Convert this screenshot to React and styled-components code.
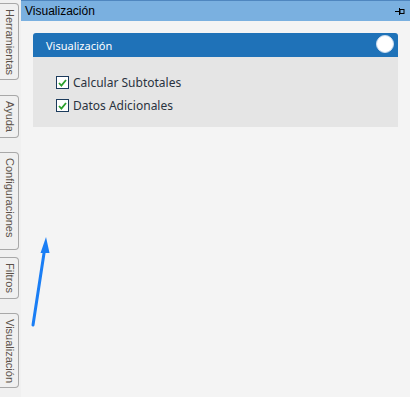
import React from 'react';
import styled, { createGlobalStyle } from 'styled-components';

const GlobalStyle = createGlobalStyle`
    html, body {
        margin: 0;
        padding: 0;
        background: #f4f4f4;
    }
    #root {
        height: 397px;
    }
`;

const tabs = [
    { label: 'Herramientas', height: 77, gap: 3 },
    { label: 'Ayuda', height: 43, gap: 15 },
    { label: 'Configuraciones', height: 98, gap: 14 },
    { label: 'Filtros', height: 42, gap: 7 },
    { label: 'Visualización', height: 75, gap: 14 },
];

const options = ['Calcular Subtotales', 'Datos Adicionales'];

const PinIcon = () => (
    <svg width="10" height="9" viewBox="0 0 10 9">
        <path d="M0 4.5h4" stroke="#000" strokeWidth="1" />
        <path d="M4.5 1v7" stroke="#000" strokeWidth="1" />
        <rect x="5" y="2.5" width="4" height="4" fill="none" stroke="#000" strokeWidth="1" />
    </svg>
);

const CheckIcon = () => (
    <svg width="9" height="8" viewBox="0 0 9 8">
        <path d="M1 4l2.4 2.6L8 1" fill="none" stroke="#2ca02c" strokeWidth="1.8" />
    </svg>
);

const App = () => {
    return (
        <>
            <GlobalStyle />
            <Page>
                <Sidebar>
                    {tabs.map((t) => (
                        <Tab key={t.label} $height={t.height} $gap={t.gap}>
                            <TabText>{t.label}</TabText>
                        </Tab>
                    ))}
                </Sidebar>
                <Main>
                    <HeaderBar>
                        <HeaderTitle>Visualización</HeaderTitle>
                        <PinIcon />
                    </HeaderBar>
                    <Content>
                        <Panel>
                            <PanelHeader>
                                <PanelTitle>Visualización</PanelTitle>
                                <Circle />
                            </PanelHeader>
                            <PanelBody>
                                {options.map((o) => (
                                    <CheckRow key={o}>
                                        <CheckBox><CheckIcon /></CheckBox>
                                        <CheckLabel>{o}</CheckLabel>
                                    </CheckRow>
                                ))}
                            </PanelBody>
                        </Panel>
                    </Content>
                </Main>
                <Arrow width="410" height="397" viewBox="0 0 410 397">
                    <path d="M33 325L44.5 250" stroke="#1a7ef5" strokeWidth="3" strokeLinecap="round" />
                    <path d="M46 237L40.5 253L49.5 253Z" fill="#1a7ef5" />
                </Arrow>
            </Page>
        </>
    );
};

const Page = styled.div`
    position: relative;
    display: flex;
    width: 410px;
    height: 397px;
    overflow: hidden;
    background: #f4f4f4;
`;

const Sidebar = styled.div`
    width: 21px;
    flex-shrink: 0;
    display: flex;
    flex-direction: column;
    background: #f0f0f0;
`;

const Tab = styled.div`
    box-sizing: border-box;
    width: 19px;
    height: ${(p) => p.$height}px;
    margin-top: ${(p) => p.$gap}px;
    border: 1px solid #a8a8a8;
    border-left: none;
    border-radius: 0 4px 4px 0;
    background: #f0f0f0;
    display: flex;
    justify-content: center;
    padding-top: 5px;
`;

const TabText = styled.span`
    writing-mode: vertical-rl;
    font-family: "Liberation Sans", Arial, sans-serif;
    font-size: 11px;
    line-height: 13px;
    color: #5b5048;
`;

const Main = styled.div`
    flex: 1;
    display: flex;
    flex-direction: column;
`;

const HeaderBar = styled.div`
    box-sizing: border-box;
    height: 21px;
    background: #7ab0e0;
    border-top: 1px solid #4f86bf;
    display: flex;
    align-items: center;
    justify-content: space-between;
    padding: 0 5px 0 4px;
`;

const HeaderTitle = styled.span`
    font-family: "Liberation Sans", Arial, sans-serif;
    font-size: 12px;
    color: #000;
`;

const Content = styled.div`
    padding: 12px;
`;

const Panel = styled.div`
    display: flex;
    flex-direction: column;
`;

const PanelHeader = styled.div`
    height: 24px;
    background: #1f72b8;
    border-radius: 3px 3px 0 0;
    display: flex;
    align-items: center;
    justify-content: space-between;
    padding: 0 4px 0 13px;
`;

const PanelTitle = styled.span`
    font-family: "Noto Sans", sans-serif;
    font-size: 11px;
    color: #fff;
`;

const Circle = styled.div`
    box-sizing: border-box;
    width: 18px;
    height: 18px;
    border-radius: 50%;
    background: #fff;
    border: 1px solid #c9dcef;
    margin-top: -2px;
`;

const PanelBody = styled.div`
    height: 70px;
    box-sizing: border-box;
    background: #e5e5e5;
    padding: 19px 0 0 23px;
    display: flex;
    flex-direction: column;
    gap: 10px;
`;

const CheckRow = styled.div`
    display: flex;
    align-items: center;
    gap: 4px;
    height: 13px;
`;

const CheckBox = styled.div`
    box-sizing: border-box;
    width: 13px;
    height: 13px;
    border: 1px solid #1c3b5c;
    background: #fff;
    display: flex;
    align-items: center;
    justify-content: center;
`;

const CheckLabel = styled.span`
    font-family: "Noto Sans", sans-serif;
    font-size: 12px;
    color: #2a3340;
`;

const Arrow = styled.svg`
    position: absolute;
    left: 0;
    top: 0;
    pointer-events: none;
`;

export default App;
